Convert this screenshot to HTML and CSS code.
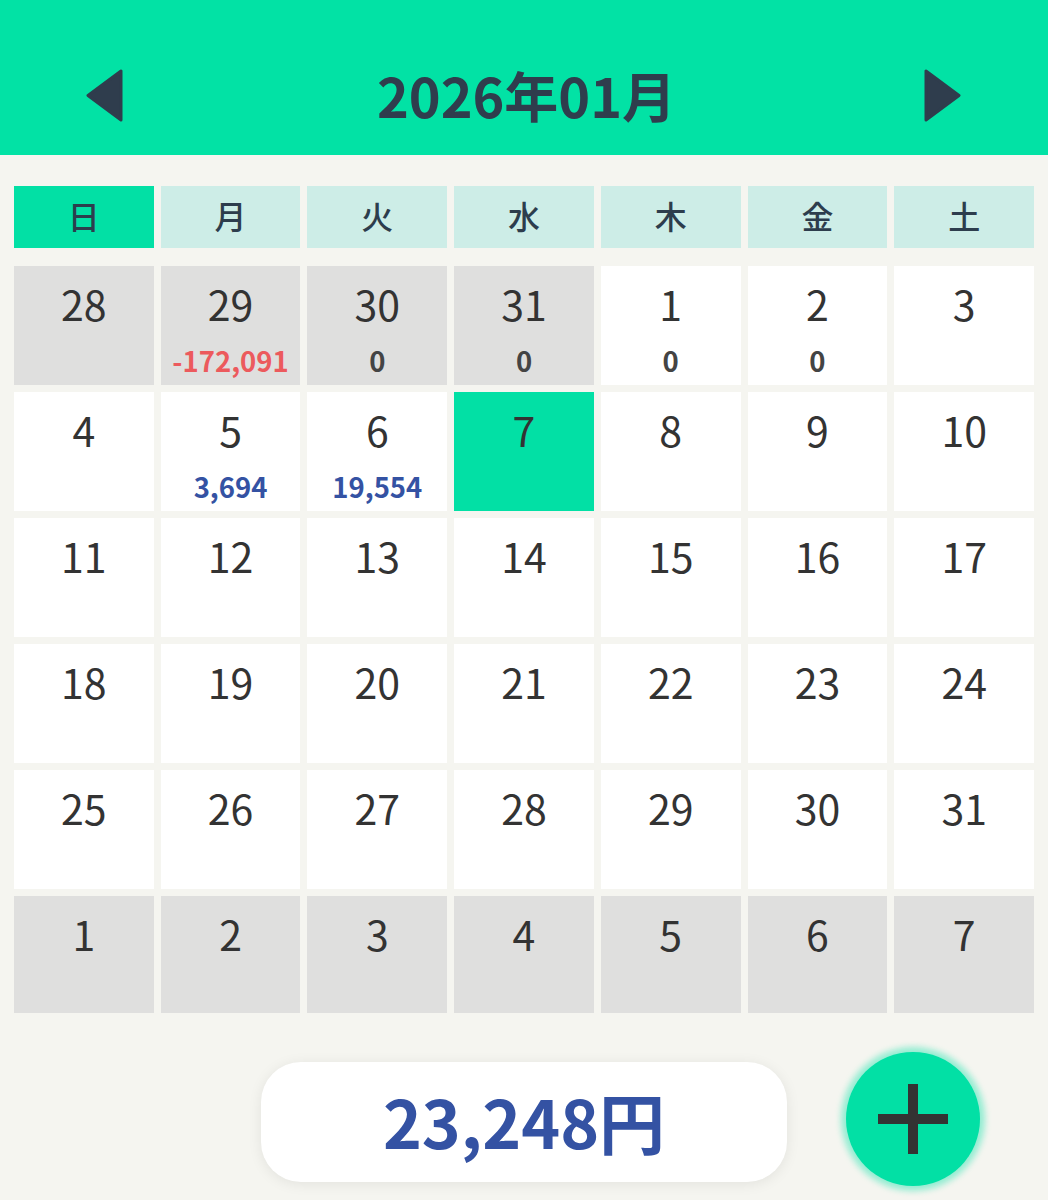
FILE: index.html
```html
<!DOCTYPE html>
<html lang="ja">
<head>
<meta charset="utf-8">
<link rel="stylesheet" href="styles.css">
</head>
<body>
<header class="header">
  <svg class="arrow" width="37" height="53" viewBox="0 0 37 53"><polygon points="35,2 35,51 2,26.5" fill="#2f3d4d" stroke="#2f3d4d" stroke-width="3" stroke-linejoin="round"/></svg>
  <h1 class="title">2026年01月</h1>
  <svg class="arrow" width="37" height="53" viewBox="0 0 37 53"><polygon points="2,2 2,51 35,26.5" fill="#2f3d4d" stroke="#2f3d4d" stroke-width="3" stroke-linejoin="round"/></svg>
</header>

<main class="calendar">
  <div class="weekdays">
    <div class="wd sun">日</div>
    <div class="wd">月</div>
    <div class="wd">火</div>
    <div class="wd">水</div>
    <div class="wd">木</div>
    <div class="wd">金</div>
    <div class="wd">土</div>
  </div>
  <div class="days">
    <div class="day other"><span class="num">28</span></div>
    <div class="day other"><span class="num">29</span><span class="amt neg">-172,091</span></div>
    <div class="day other"><span class="num">30</span><span class="amt zero">0</span></div>
    <div class="day other"><span class="num">31</span><span class="amt zero">0</span></div>
    <div class="day"><span class="num">1</span><span class="amt zero">0</span></div>
    <div class="day"><span class="num">2</span><span class="amt zero">0</span></div>
    <div class="day"><span class="num">3</span></div>

    <div class="day"><span class="num">4</span></div>
    <div class="day"><span class="num">5</span><span class="amt pos">3,694</span></div>
    <div class="day"><span class="num">6</span><span class="amt pos">19,554</span></div>
    <div class="day today"><span class="num">7</span></div>
    <div class="day"><span class="num">8</span></div>
    <div class="day"><span class="num">9</span></div>
    <div class="day"><span class="num">10</span></div>

    <div class="day"><span class="num">11</span></div>
    <div class="day"><span class="num">12</span></div>
    <div class="day"><span class="num">13</span></div>
    <div class="day"><span class="num">14</span></div>
    <div class="day"><span class="num">15</span></div>
    <div class="day"><span class="num">16</span></div>
    <div class="day"><span class="num">17</span></div>

    <div class="day"><span class="num">18</span></div>
    <div class="day"><span class="num">19</span></div>
    <div class="day"><span class="num">20</span></div>
    <div class="day"><span class="num">21</span></div>
    <div class="day"><span class="num">22</span></div>
    <div class="day"><span class="num">23</span></div>
    <div class="day"><span class="num">24</span></div>

    <div class="day"><span class="num">25</span></div>
    <div class="day"><span class="num">26</span></div>
    <div class="day"><span class="num">27</span></div>
    <div class="day"><span class="num">28</span></div>
    <div class="day"><span class="num">29</span></div>
    <div class="day"><span class="num">30</span></div>
    <div class="day"><span class="num">31</span></div>

    <div class="day other"><span class="num">1</span></div>
    <div class="day other"><span class="num">2</span></div>
    <div class="day other"><span class="num">3</span></div>
    <div class="day other"><span class="num">4</span></div>
    <div class="day other"><span class="num">5</span></div>
    <div class="day other"><span class="num">6</span></div>
    <div class="day other"><span class="num">7</span></div>
  </div>
</main>

<footer class="footer">
  <div class="total">23,248円</div>
  <button class="fab" aria-label="追加">
    <svg width="70" height="70" viewBox="0 0 70 70"><rect x="0" y="30" width="70" height="10" fill="#333"/><rect x="30" y="0" width="10" height="70" fill="#333"/></svg>
  </button>
</footer>
</body>
</html>
```

FILE: styles.css
```css
* { box-sizing: border-box; }
html, body { margin: 0; padding: 0; }
body {
  background: #f5f5f0;
  font-family: "Noto Sans CJK JP", "Noto Sans", sans-serif;
  color: #333;
  width: 1048px;
  height: 1200px;
  overflow: hidden;
}
.header {
  height: 155px;
  background: #02e2a5;
  display: flex;
  align-items: center;
  justify-content: space-between;
  padding: 36px 87px 0 86px;
}
.arrow { display: block; }
.title {
  margin: 0;
  font-size: 54px;
  font-weight: 700;
  color: #2f3d4d;
  line-height: 1;
  margin-left: 6px;
  margin-top: -2px;
}
.calendar {
  padding: 31px 14px 0 14px;
}
.weekdays, .days {
  display: grid;
  grid-template-columns: repeat(7, 1fr);
  column-gap: 7px;
}
.weekdays { margin-bottom: 18px; }
.wd {
  height: 62px;
  background: #cdede7;
  color: #2d3d4d;
  font-size: 32px;
  font-weight: 500;
  line-height: 1;
  display: flex;
  align-items: center;
  justify-content: center;
  padding-bottom: 4px;
}
.wd.sun { background: #02e0a5; }
.days {
  row-gap: 7px;
  grid-template-rows: repeat(5, 119px) 117px;
}
.day {
  background: #fff;
  display: flex;
  flex-direction: column;
  align-items: center;
  padding-top: 11px;
}
.day.other { background: #dfdfde; }
.day.today { background: #02e0a5; }
.num {
  font-size: 41px;
  line-height: 52px;
  color: #333;
}
.amt {
  font-size: 27.5px;
  font-weight: 700;
  line-height: 30px;
  margin-top: 16px;
}
.amt.neg { color: #ec5a5d; }
.amt.pos { color: #3452a3; }
.amt.zero { color: #444; }
.footer {
  position: relative;
  display: flex;
  justify-content: center;
  padding-top: 49px;
}
.total {
  width: 526px;
  height: 120px;
  background: #fff;
  border-radius: 40px;
  box-shadow: 0 2px 14px rgba(0,0,0,0.08);
  display: flex;
  align-items: center;
  justify-content: center;
  font-size: 66px;
  font-weight: 700;
  color: #3452a3;
  padding-bottom: 4px;
}
.fab {
  position: absolute;
  left: 846px;
  top: 39px;
  width: 134px;
  height: 134px;
  border-radius: 50%;
  border: none;
  padding: 0;
  background: #02e0a5;
  box-shadow: 0 0 6px 5px rgba(2,224,165,0.4);
  display: flex;
  align-items: center;
  justify-content: center;
}
.fab svg { display: block; }
```
